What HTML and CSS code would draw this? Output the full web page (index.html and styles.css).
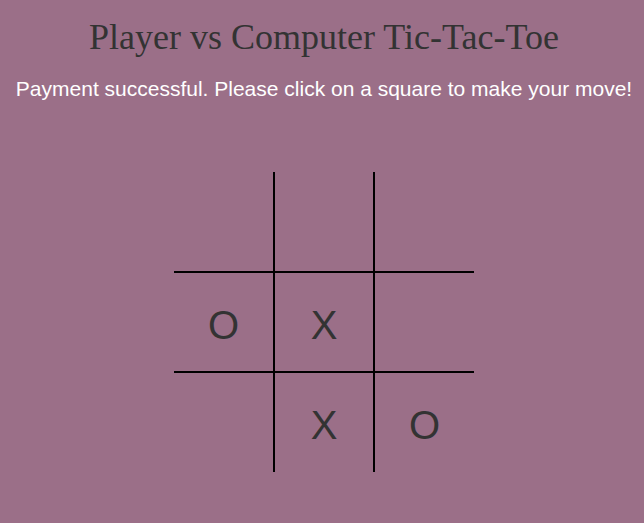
FILE: index.html
```html
<!DOCTYPE html>
<html>
<head>
<meta charset="utf-8">
<link rel="stylesheet" href="styles.css">
</head>
<body>
<h1 class="title">Player vs Computer Tic-Tac-Toe</h1>
<p class="status">Payment successful. Please click on a square to make your move!</p>
<div class="board">
  <div class="cell"></div>
  <div class="cell c-l"></div>
  <div class="cell c-l"></div>
  <div class="cell c-t">O</div>
  <div class="cell c-t c-l">X</div>
  <div class="cell c-t c-l"></div>
  <div class="cell c-t"></div>
  <div class="cell c-t c-l">X</div>
  <div class="cell c-t c-l">O</div>
</div>
</body>
</html>
```
FILE: styles.css
```css
html, body {
  margin: 0;
  padding: 0;
  background: #9b6f88;
}
body {
  padding: 1px 0 0 4px;
}
.title {
  font-family: "Liberation Serif", serif;
  font-weight: normal;
  font-size: 36px;
  color: #333333;
  text-align: center;
  margin: 16px 0 0 0;
  line-height: 40px;
}
.status {
  font-family: "Liberation Sans", Arial, sans-serif;
  font-size: 21px;
  color: #ffffff;
  text-align: center;
  margin: 20px 0 0 0;
  line-height: 24px;
}
.board {
  display: grid;
  grid-template-columns: 99px 100px 101px;
  grid-template-rows: 99px 100px 101px;
  width: 300px;
  margin: 71px 0 0 170px;
}
.cell {
  box-sizing: border-box;
  display: flex;
  align-items: center;
  justify-content: center;
  padding-top: 6px;
  font-family: "Liberation Sans", Arial, sans-serif;
  font-size: 40px;
  color: #333333;
}
.c-l { border-left: 2px solid #000; }
.c-t { border-top: 2px solid #000; }
```
